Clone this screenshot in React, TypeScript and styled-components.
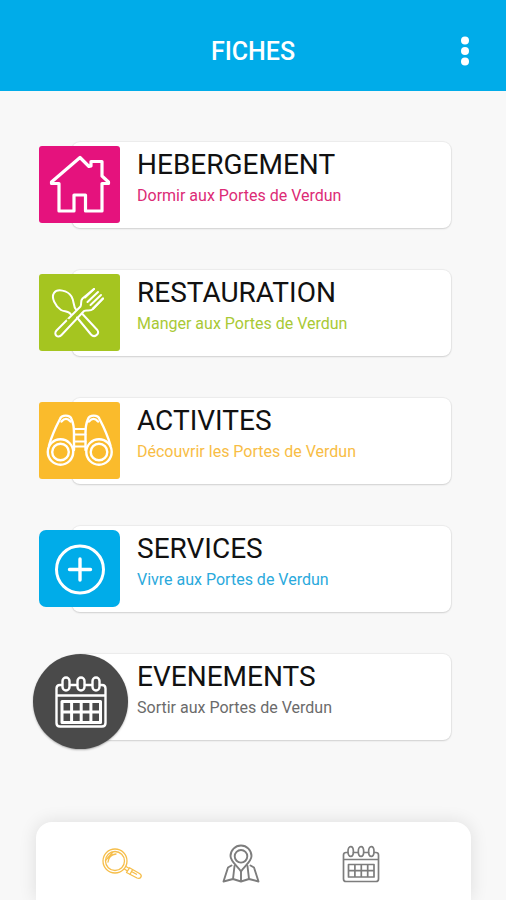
import React from "react";
import styled, { createGlobalStyle } from "styled-components";

const GlobalStyle = createGlobalStyle`
  *, *::before, *::after { box-sizing: border-box; }
  body {
    margin: 0;
    background: #f8f8f8;
    font-family: Roboto, "Liberation Sans", sans-serif;
  }
`;

const Page = styled.div`
  display: flex;
  flex-direction: column;
  min-height: 100vh;
  overflow: hidden;
`;

const Header = styled.header`
  display: grid;
  grid-template-columns: 1fr auto 1fr;
  align-items: center;
  padding: 13px 32px 0;
  height: 91px;
  background: #00ace9;
  color: #fff;
`;

const HeaderTitle = styled.h1`
  grid-column: 2;
  margin: 0;
  font-size: 25px;
  line-height: 32px;
  font-weight: 500;
`;

const MenuButton = styled.button`
  justify-self: end;
  display: flex;
  padding: 0 0 2px;
  border: 0;
  background: none;
  color: inherit;
  cursor: pointer;
`;

const CategoryList = styled.ul`
  display: flex;
  flex-direction: column;
  gap: 42px;
  margin: 0;
  padding: 51px 55px 42px 39px;
  list-style: none;
`;

const CategoryLink = styled.a`
  display: grid;
  grid-template-columns: 33px 48px 1fr;
  text-decoration: none;
`;

const Card = styled.div`
  grid-area: 1 / 2 / 2 / 4;
  min-height: 86px;
  padding: 6px 12px 20px 65px;
  border-radius: 8px;
  background: #fff;
  box-shadow: 0 0 1px 1px rgba(0, 0, 0, 0.05), 0 1px 2px rgba(0, 0, 0, 0.12);
`;

const CardTitle = styled.h2`
  margin: 0;
  color: #111;
  font-size: 28px;
  line-height: 34px;
  font-weight: 400;
`;

const CardText = styled.p<{ $color: string }>`
  margin: 4px 0 0;
  color: ${(p) => p.$color};
  font-size: 16px;
  line-height: 20px;
`;

const Tile = styled.span<{ $color: string; $radius: number }>`
  grid-area: 1 / 1 / 2 / 3;
  z-index: 1;
  display: flex;
  align-items: center;
  justify-content: center;
  height: 77px;
  margin-top: 4px;
  border-radius: ${(p) => p.$radius}px;
  background: ${(p) => p.$color};
`;

const RoundTile = styled(Tile)`
  height: 95px;
  margin: 0 -8px -9px -6px;
  border-radius: 50%;
  box-shadow: 0 1px 2px rgba(0, 0, 0, 0.3);
`;

const BottomNav = styled.nav`
  display: grid;
  grid-template-columns: repeat(3, 1fr);
  align-items: center;
  height: 78px;
  margin: auto 35px 0 36px;
  padding: 6px 50px 0 26px;
  border-radius: 16px 16px 0 0;
  background: #fff;
  box-shadow: 0 0 18px rgba(0, 0, 0, 0.11);
`;

const NavLink = styled.a<{ $color: string }>`
  justify-self: center;
  display: flex;
  color: ${(p) => p.$color};
`;

const Icon = styled.svg`
  display: block;
  fill: none;
  stroke: currentColor;
  stroke-linecap: round;
  stroke-linejoin: round;
`;

const TileIcon = styled(Icon)`
  color: #fff;
`;

const DotsIcon = () => (
  <Icon width="18" height="32" viewBox="0 0 18 32" aria-hidden>
    <g fill="currentColor" stroke="none">
      <circle cx="9" cy="5.4" r="4" />
      <circle cx="9" cy="16" r="4" />
      <circle cx="9" cy="26.6" r="4" />
    </g>
  </Icon>
);

const HouseIcon = () => (
  <TileIcon width="81" height="77" viewBox="0 0 81 77" strokeWidth="3.2" aria-hidden>
    <path d="M41 11.500 12.500 36v1.500h7.500V65h15V49h11.500V65H63V37.500h6.500V36L63 30V15.500H52v4.500l-2 .5z" />
  </TileIcon>
);

const CutleryIcon = () => (
  <TileIcon width="81" height="77" viewBox="0 0 81 77" strokeWidth="2" aria-hidden>
    <path d="M37 35.500c-3-3-1.500-8-4.500-13C28.500 16 18 14.500 15 19c-3 4.500 1 13 7 17 3.500 2.300 7-.3 10 4.500" />
    <path d="M38 43.500 52 60.500c3.500 3.800 9-.5 6.300-4.500L43 39.500" />
    <path d="m55 15-11.500 9.500c-2.500 2.500-.5 5.500-2 8L17.500 56.500c-3.500 3.800 1.500 8.500 5 4.500L45 37c2.500-1.500 6 .8 9-2l10-10.500" />
    <path d="M59 18 48.500 28M62 21 51.500 31M64 24.500 54 34.500M55 15l-9 8.500" />
    <path d="M28.500 45.500 31 48" stroke="#a5c520" />
  </TileIcon>
);

const BinocularsIcon = () => (
  <TileIcon width="81" height="77" viewBox="0 0 81 77" strokeWidth="2.400" aria-hidden>
    <circle cx="21.500" cy="50" r="12.700" />
    <circle cx="21.500" cy="50" r="8.300" />
    <circle cx="60" cy="50" r="12.700" />
    <circle cx="60" cy="50" r="8.300" />
    <path d="M10 43.500c2.500-9 6.500-18 11-26.500 1.500-4.500 10-4.500 11.500 0 2 4.500 2.500 9 2.500 14v17" />
    <path d="M71.500 43.500c-2.500-9-6.500-18-11-26.500-1.500-4.500-10-4.500-11.500 0-2 4.500-2.500 9-2.500 14v17" />
    <path d="M22.500 19.500c3-3.500 6-3.500 9 0M50 19.500c3-3.500 6-3.500 9 0" />
    <path d="M35 27h11.500M35 32.500h11.500M35 39.500h11.500M35 44.500h11.500" strokeWidth="2" />
  </TileIcon>
);

const PlusIcon = () => (
  <TileIcon width="81" height="77" viewBox="0 0 81 77" strokeWidth="3" aria-hidden>
    <circle cx="41" cy="39.500" r="23.500" />
    <path d="M41 29v21M30.500 39.500h21" strokeWidth="3.400" />
  </TileIcon>
);

const EventIcon = () => (
  <TileIcon width="54" height="54" viewBox="0 0 54 54" strokeWidth="2.400" aria-hidden>
    <path d="M8 10H6c-2 0-3.500 1.500-3.500 3.500V48c0 2 1.500 3.500 3.500 3.500h42c2 0 3.500-1.500 3.500-3.500V13.500c0-2-1.500-3.500-3.500-3.500h-2M16 10h7M31 10h7M2.500 20.500h49" />
    <rect x="8.500" y="2.500" width="7" height="13" rx="3.500" />
    <rect x="23.500" y="2.500" width="7" height="13" rx="3.500" />
    <rect x="38.500" y="2.500" width="7" height="13" rx="3.500" />
    <path d="M8 26.500h38.500v21H8zM8 37h38.500M17.600 26.500v21M27.200 26.500v21M36.900 26.500v21" strokeWidth="3" />
  </TileIcon>
);

const SearchIcon = () => (
  <Icon width="42" height="34" viewBox="0 0 42 34" strokeWidth="1.300" aria-hidden>
    <circle cx="14" cy="14" r="12" />
    <circle cx="14" cy="14" r="9.500" />
    <path d="M7 15c.5-4.500 3.500-7.500 8-8M4.500 13.500 11.500 5.500" />
    <path d="m25 19.500 3 1.700M23.500 22l2.500 1.800M28.500 20.800 38.500 26.500c3.500 2.300 1 6-2.500 4.500L25.500 25.500z" />
    <path d="m30.500 24.500 5 2.800M31.500 22.800l-2.500 4.500" />
  </Icon>
);

const MapIcon = () => (
  <Icon width="38" height="40" viewBox="0 0 38 40" strokeWidth="1.900" aria-hidden>
    <path d="M19 27.500C15.500 22 8.500 17.500 8.500 12a10.500 10.500 0 0 1 21 0c0 5.500-7 10-10.500 15.500z" />
    <circle cx="19" cy="12.300" r="6.300" />
    <path d="M9.500 21.500 6 23.500 1.500 37.500 11 35l8 2.500 8-2.500 9.500 2.500L32 23.500l-3.500-2M12.500 22 11 35M25.500 22 27 35M19 28v9.500" />
  </Icon>
);

const CalendarIcon = () => (
  <Icon width="38" height="38" viewBox="0 0 38 38" strokeWidth="1.700" aria-hidden>
    <path d="M5.500 7.500H4C2.500 7.500 1.500 8.500 1.500 10v24c0 1.500 1 2.500 2.500 2.500h30c1.500 0 2.500-1 2.500-2.500V10c0-1.500-1-2.500-2.500-2.500h-1.500M11.500 7.500h4.300M22.200 7.500h4.300M1.500 14.500h35" />
    <ellipse cx="8.700" cy="6.500" rx="2.700" ry="4.900" />
    <ellipse cx="19" cy="6.500" rx="2.700" ry="4.900" />
    <ellipse cx="29.300" cy="6.500" rx="2.700" ry="4.900" />
    <path d="M6.500 19.500h25.500V32H6.500zM6.500 25.700H32M12.900 19.500V32M19.300 19.500V32M25.700 19.500V32" />
  </Icon>
);

interface Category {
  id: string;
  title: string;
  text: string;
  color: string;
  tileColor: string;
  radius: number;
  round?: boolean;
  icon: React.ReactNode;
}

const categories: Category[] = [
  { id: "hebergement", title: "HEBERGEMENT", text: "Dormir aux Portes de Verdun", color: "#dc2b76", tileColor: "#e5127d", radius: 3, icon: <HouseIcon /> },
  { id: "restauration", title: "RESTAURATION", text: "Manger aux Portes de Verdun", color: "#a9c935", tileColor: "#a5c520", radius: 3, icon: <CutleryIcon /> },
  { id: "activites", title: "ACTIVITES", text: "Découvrir les Portes de Verdun", color: "#f8bd45", tileColor: "#fabb2c", radius: 3, icon: <BinocularsIcon /> },
  { id: "services", title: "SERVICES", text: "Vivre aux Portes de Verdun", color: "#2aa9dc", tileColor: "#00ace9", radius: 7, icon: <PlusIcon /> },
  { id: "evenements", title: "EVENEMENTS", text: "Sortir aux Portes de Verdun", color: "#6b6b6b", tileColor: "#4a4a4a", radius: 48, round: true, icon: <EventIcon /> },
];

export default function App() {
  return (
    <Page>
      <GlobalStyle />
      <Header>
        <HeaderTitle>FICHES</HeaderTitle>
        <MenuButton type="button" aria-label="Menu">
          <DotsIcon />
        </MenuButton>
      </Header>
      <main>
        <CategoryList>
          {categories.map((c) => {
            const Badge = c.round ? RoundTile : Tile;
            return (
              <li key={c.id}>
                <CategoryLink href={`#${c.id}`}>
                  <Badge $color={c.tileColor} $radius={c.radius}>
                    {c.icon}
                  </Badge>
                  <Card>
                    <CardTitle>{c.title}</CardTitle>
                    <CardText $color={c.color}>{c.text}</CardText>
                  </Card>
                </CategoryLink>
              </li>
            );
          })}
        </CategoryList>
      </main>
      <BottomNav aria-label="Navigation">
        <NavLink href="#fiches" $color="#f6be4b" aria-label="Fiches" aria-current="page">
          <SearchIcon />
        </NavLink>
        <NavLink href="#carte" $color="#7d7d7d" aria-label="Carte">
          <MapIcon />
        </NavLink>
        <NavLink href="#agenda" $color="#7d7d7d" aria-label="Agenda">
          <CalendarIcon />
        </NavLink>
      </BottomNav>
    </Page>
  );
}
